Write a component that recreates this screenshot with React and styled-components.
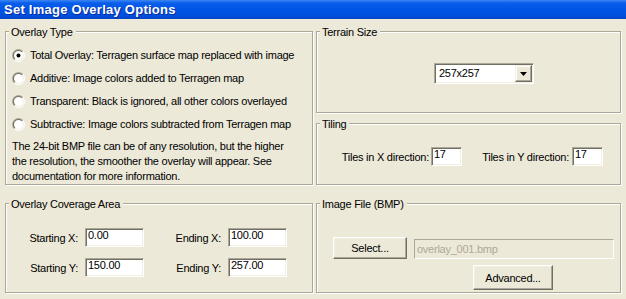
import React from 'react';
import styled, { createGlobalStyle } from 'styled-components';

const GlobalStyle = createGlobalStyle`
  html, body {
    margin: 0;
    padding: 0;
  }
  body {
    background: #ECE9D8;
    font-family: "Liberation Sans", Arial, sans-serif;
    font-size: 11px;
    letter-spacing: -0.25px;
    color: #000;
  }
`;

const Window = styled.div`
  width: 626px;
  height: 299px;
  overflow: hidden;
  background: #ECE9D8;
  display: flex;
  flex-direction: column;
`;

const TitleBar = styled.div`
  flex: none;
  height: 19px;
  padding-left: 4px;
  line-height: 19px;
  font-size: 13px;
  font-weight: bold;
  letter-spacing: 0.25px;
  color: #fff;
  text-shadow: 1px 1px 0 #0A2A9C;
  background: linear-gradient(#3C86F4 0px, #0A5EEA 3px, #0055E6 50%, #004FDC 85%, #0042C2 100%);
`;

const Body = styled.div`
  display: grid;
  grid-template-columns: 308px 305px;
  column-gap: 3px;
  padding: 12px 0 0 5px;
`;

const Column = styled.div`
  display: flex;
  flex-direction: column;
  gap: ${p => p.$gap}px;
`;

const Group = styled.div`
  box-sizing: border-box;
  height: ${p => p.$h}px;
  margin-top: ${p => p.$mt || 0}px;
  border: 1px solid #ACA899;
  box-shadow: inset 1px 1px 0 #fff, 1px 1px 0 #fff;
  display: flex;
  flex-direction: column;
  align-items: flex-start;
`;

const Caption = styled.span`
  margin: -6px 0 0 3px;
  padding: 0 3px 0 2px;
  line-height: 13px;
  background: #ECE9D8;
`;

const RadioList = styled.div`
  display: flex;
  flex-direction: column;
  gap: 10px;
  margin: 10px 0 0 6px;
`;

const RadioRow = styled.label`
  display: flex;
  align-items: center;
  gap: 5px;
  height: 13px;
  line-height: 13px;
  white-space: nowrap;
`;

const Note = styled.p`
  margin: 8px 0 0 6px;
  line-height: 15px;
  white-space: nowrap;
`;

const Row = styled.div`
  display: flex;
  align-items: ${p => p.$align || 'center'};
  margin: ${p => p.$m || '0'};
`;

const Label = styled.span`
  width: ${p => p.$w}px;
  margin-right: ${p => p.$gap}px;
  text-align: right;
  white-space: nowrap;
`;

const Field = styled.div`
  box-sizing: border-box;
  width: ${p => p.$w}px;
  height: ${p => p.$h || 19}px;
  margin-left: ${p => p.$ml || 0}px;
  padding: 0 2px;
  border: 1px solid;
  border-color: #ACA899 #fff #fff #ACA899;
  box-shadow: ${p => p.$disabled ? 'none' : 'inset 1px 1px 0 #716F64, inset -1px -1px 0 #F1EFE2'};
  background: ${p => p.$disabled ? '#ECE9D8' : '#fff'};
  color: ${p => p.$disabled ? '#ACA899' : '#000'};
  line-height: ${p => p.$lh || 13}px;
  white-space: nowrap;
`;

const Combo = styled.div`
  box-sizing: border-box;
  width: 100px;
  height: 21px;
  margin: 24px 0 0 117px;
  padding: 1px;
  border: 1px solid;
  border-color: #ACA899 #fff #fff #ACA899;
  box-shadow: inset 1px 1px 0 #716F64, inset -1px -1px 0 #F1EFE2;
  background: #fff;
  display: flex;
`;

const ComboText = styled.span`
  flex: 1;
  padding-left: 3px;
  line-height: 17px;
`;

const ArrowButton = styled.span`
  box-sizing: border-box;
  width: 17px;
  height: 17px;
  border: 1px solid;
  border-color: #F1EFE2 #716F64 #716F64 #F1EFE2;
  box-shadow: inset -1px -1px 0 #ACA899, inset 1px 1px 0 #fff;
  background: #ECE9D8;
  display: flex;
  align-items: center;
  justify-content: center;
`;

const Button = styled.button`
  box-sizing: border-box;
  width: ${p => p.$w}px;
  height: ${p => p.$h}px;
  margin: ${p => p.$m || '0'};
  padding: 0;
  border: 1px solid;
  border-color: #fff #716F64 #716F64 #fff;
  box-shadow: inset -1px -1px 0 #ACA899, inset 1px 1px 0 #F1EFE2;
  background: #ECE9D8;
  font: inherit;
  letter-spacing: inherit;
  color: #000;
`;

const Radio = ({ checked }) => (
  <svg width="13" height="13" viewBox="0 0 13 13">
    <defs>
      <linearGradient id="rOuter" x1="0" y1="0" x2="1" y2="1">
        <stop offset="0.45" stopColor="#ACA899" />
        <stop offset="0.55" stopColor="#fff" />
      </linearGradient>
      <linearGradient id="rInner" x1="0" y1="0" x2="1" y2="1">
        <stop offset="0.45" stopColor="#716F64" />
        <stop offset="0.55" stopColor="#F1EFE2" />
      </linearGradient>
    </defs>
    <circle cx="6.5" cy="6.5" r="6.5" fill="url(#rOuter)" />
    <circle cx="6.5" cy="6.5" r="5.5" fill="url(#rInner)" />
    <circle cx="6.5" cy="6.5" r="4.5" fill="#fff" />
    {checked && <circle cx="6.5" cy="6.5" r="2" fill="#000" />}
  </svg>
);

const overlayTypes = [
  'Total Overlay: Terragen surface map replaced with image',
  'Additive: Image colors added to Terragen map',
  'Transparent: Black is ignored, all other colors overlayed',
  'Subtractive: Image colors subtracted from Terragen map',
];

export default function App() {
  return (
    <Window>
      <GlobalStyle />
      <TitleBar>Set Image Overlay Options</TitleBar>
      <Body>
        <Column $gap={18}>
          <Group $h={154}>
            <Caption>Overlay Type</Caption>
            <RadioList>
              {overlayTypes.map((t, i) => (
                <RadioRow key={t}>
                  <Radio checked={i === 0} />
                  {t}
                </RadioRow>
              ))}
            </RadioList>
            <Note>
              The 24-bit BMP file can be of any resolution, but the higher<br />
              the resolution, the smoother the overlay will appear. See<br />
              documentation for more information.
            </Note>
          </Group>
          <Group $h={90}>
            <Caption>Overlay Coverage Area</Caption>
            <Row $m="17px 0 0 0">
              <Label $w={72} $gap={7}>Starting X:</Label>
              <Field $w={59}>0.00</Field>
              <Label $w={77} $gap={7}>Ending X:</Label>
              <Field $w={59}>100.00</Field>
            </Row>
            <Row $m="11px 0 0 0">
              <Label $w={72} $gap={7}>Starting Y:</Label>
              <Field $w={59}>150.00</Field>
              <Label $w={77} $gap={7}>Ending Y:</Label>
              <Field $w={59}>257.00</Field>
            </Row>
          </Group>
        </Column>
        <Column $gap={10}>
          <Group $h={82}>
            <Caption>Terrain Size</Caption>
            <Combo>
              <ComboText>257x257</ComboText>
              <ArrowButton>
                <svg width="7" height="4" viewBox="0 0 7 4">
                  <polygon points="0,0 7,0 3.5,4" fill="#000" />
                </svg>
              </ArrowButton>
            </Combo>
          </Group>
          <Group $h={62}>
            <Caption>Tiling</Caption>
            <Row $m="16px 0 0 14px">
              <Label $w={98} $gap={2}>Tiles in X direction:</Label>
              <Field $w={31}>17</Field>
              <Label $w={107} $gap={3}>Tiles in Y direction:</Label>
              <Field $w={31}>17</Field>
            </Row>
          </Group>
          <Group $h={90} $mt={8}>
            <Caption>Image File (BMP)</Caption>
            <Row $align="flex-end" $m="26px 0 0 16px">
              <Button $w={74} $h={22}>Select...</Button>
              <Field $w={200} $h={20} $lh={18} $ml={7} $disabled>overlay_001.bmp</Field>
            </Row>
            <Button $w={80} $h={25} $m="6px 0 0 156px">Advanced...</Button>
          </Group>
        </Column>
      </Body>
    </Window>
  );
}
